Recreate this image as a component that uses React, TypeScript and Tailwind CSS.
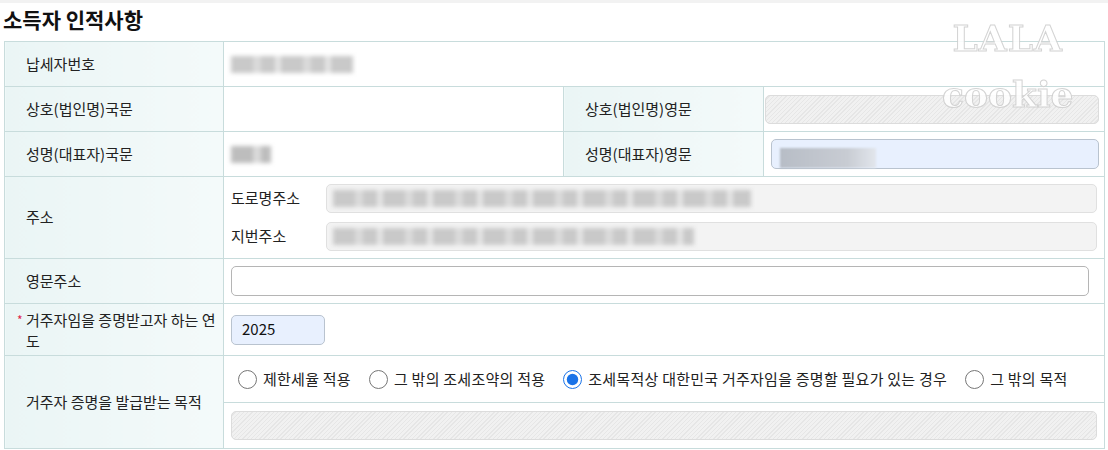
import React from "react";

const label =
  "bg-[linear-gradient(90deg,#eaf5f5,#f4fafa)] border border-[#c8dcdc] pl-[21px] pr-[6px] text-[15px] text-[#222] align-middle";
const cell = "border border-[#c8dcdc] px-[7px] align-middle";
const striped =
  "h-[29px] rounded-[5px] border border-[#dcdcdc] bg-[repeating-linear-gradient(135deg,#f1f1f1_0px,#f1f1f1_2px,#e6e6e6_2px,#e6e6e6_3px)]";

const Blur = ({ w, shade = "#c9c9c9" }: { w: number; shade?: string }) => (
  <div
    className="h-[17px] blur-[2px]"
    style={{
      width: w,
      background: `repeating-linear-gradient(90deg, ${shade} 0 22px, #dadada 22px 30px, ${shade} 30px 44px, #e4e4e4 44px 50px)`,
    }}
  />
);

const Radio = ({ text, checked }: { text: string; checked?: boolean }) => (
  <label className="flex items-center gap-[6px] mr-[18px]">
    <input
      type="radio"
      name="purpose"
      defaultChecked={checked}
      className="w-[19px] h-[19px] m-0 accent-[#1a73e8]"
    />
    <span className="tracking-[0.25px]">{text}</span>
  </label>
);

export default function App() {
  return (
    <div className="w-[1108px] h-[450px] bg-white relative font-['Noto_Sans_CJK_KR','Noto_Sans',sans-serif] text-[#222] overflow-hidden">
      <div className="h-[3px] bg-[#f2f2f2]" />
      <h2 className="pl-[3px] pt-[2px] text-[21px] font-bold leading-[28px] text-[#111]">
        소득자 인적사항
      </h2>
      <table className="ml-[4px] mt-[8px] w-[1100px] border-collapse table-fixed text-[15px]">
        <colgroup>
          <col className="w-[219px]" />
          <col className="w-[340px]" />
          <col className="w-[200px]" />
          <col className="w-[341px]" />
        </colgroup>
        <tbody>
          <tr className="h-[45px]">
            <td className={label}>납세자번호</td>
            <td className={cell} colSpan={3}>
              <Blur w={122} />
            </td>
          </tr>
          <tr className="h-[45px]">
            <td className={label}>상호(법인명)국문</td>
            <td className={cell}></td>
            <td className={label}>상호(법인명)영문</td>
            <td className={cell}>
              <div className={`${striped} w-[334px] ml-[-6px]`} />
            </td>
          </tr>
          <tr className="h-[45px]">
            <td className={label}>성명(대표자)국문</td>
            <td className={cell}>
              <Blur w={40} shade="#bdbdbd" />
            </td>
            <td className={label}>성명(대표자)영문</td>
            <td className={cell}>
              <div className="h-[30px] w-[328px] rounded-[5px] border border-[#b9c3cf] bg-[#e8f0fe] flex items-center pl-[8px]">
                <div className="h-[20px] w-[96px] mt-[8px] bg-[linear-gradient(90deg,#b7bdc6,#c8ccd3_70%,#e2e6ec)] blur-[1px]" />
              </div>
            </td>
          </tr>
          <tr className="h-[82px]">
            <td className={label}>주소</td>
            <td className={cell} colSpan={3}>
              <div className="flex flex-col gap-[9px]">
                <div className="flex items-center">
                  <span className="w-[95px]">도로명주소</span>
                  <div className="h-[29px] flex-1 rounded-[5px] border border-[#e0e0e0] bg-[#f3f3f3] flex items-center pl-[6px]">
                    <Blur w={418} />
                  </div>
                </div>
                <div className="flex items-center">
                  <span className="w-[95px]">지번주소</span>
                  <div className="h-[29px] flex-1 rounded-[5px] border border-[#e0e0e0] bg-[#f3f3f3] flex items-center pl-[6px]">
                    <Blur w={361} />
                  </div>
                </div>
              </div>
            </td>
          </tr>
          <tr className="h-[45px]">
            <td className={label}>영문주소</td>
            <td className={cell} colSpan={3}>
              <div className="h-[30px] w-[858px] rounded-[5px] border border-[#b5b5b5] bg-white" />
            </td>
          </tr>
          <tr className="h-[52px]">
            <td className={`${label} !pl-[12px] leading-[21px]`}>
              <div className="flex items-start">
                <span className="text-[#e0244a] text-[12px] w-[9px] shrink-0 leading-[21px]">*</span>
                <span>거주자임을 증명받고자 하는 연도</span>
              </div>
            </td>
            <td className={cell} colSpan={3}>
              <div className="h-[30px] w-[94px] rounded-[5px] border border-[#b9c3cf] bg-[#e8f0fe] flex items-center pl-[10px] text-[15px] text-[#111]">
                2025
              </div>
            </td>
          </tr>
          <tr>
            <td className={label}>거주자 증명을 발급받는 목적</td>
            <td className="border border-[#c8dcdc] p-0" colSpan={3}>
              <div className="h-[47px] flex items-center pl-[14px] border-b border-[#c8dcdc]">
                <Radio text="제한세율 적용" />
                <Radio text="그 밖의 조세조약의 적용" />
                <Radio text="조세목적상 대한민국 거주자임을 증명할 필요가 있는 경우" checked />
                <Radio text="그 밖의 목적" />
              </div>
              <div className="h-[45px] flex items-center px-[7px]">
                <div className={`${striped} w-full`} />
              </div>
            </td>
          </tr>
        </tbody>
      </table>
      <div className="absolute left-[942px] top-[20px] flex flex-col items-center leading-none text-white font-['DejaVu_Serif',serif] font-bold [-webkit-text-stroke:1px_#cfcfcf] opacity-90">
        <span className="text-[36px] tracking-[1px]">LALA</span>
        <span className="text-[36px] mt-[20px]">cookie</span>
      </div>
    </div>
  );
}
